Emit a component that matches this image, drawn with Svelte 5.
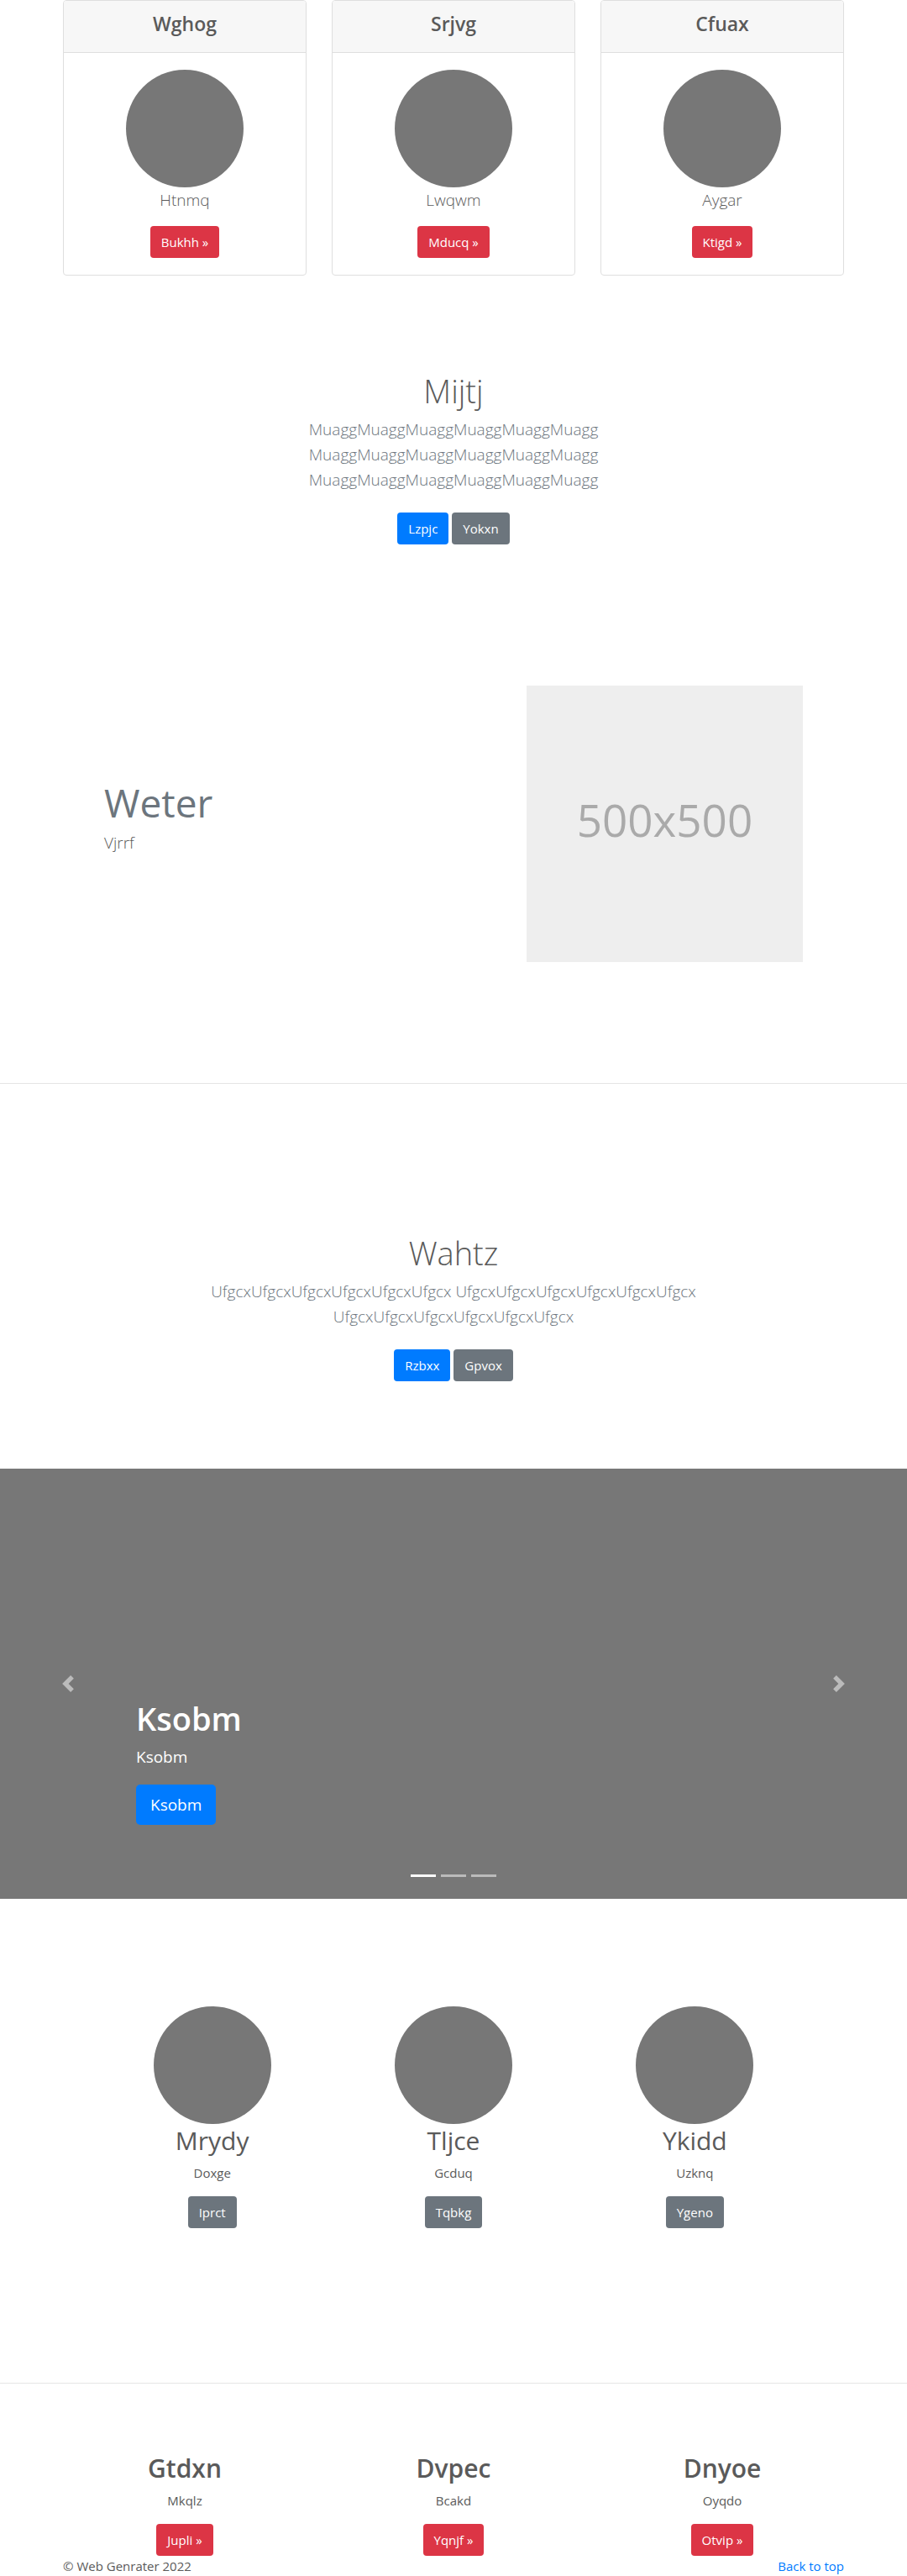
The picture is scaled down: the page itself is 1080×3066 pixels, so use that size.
<script>
  const cards = [
    { title: 'Wghog', text: 'Htnmq', action: 'Bukhh »' },
    { title: 'Srjvg', text: 'Lwqwm', action: 'Mducq »' },
    { title: 'Cfuax', text: 'Aygar', action: 'Ktigd »' }
  ];
  const people = [
    { title: 'Mrydy', text: 'Doxge', action: 'Iprct' },
    { title: 'Tljce', text: 'Gcduq', action: 'Tqbkg' },
    { title: 'Ykidd', text: 'Uzknq', action: 'Ygeno' }
  ];
  const links = [
    { title: 'Gtdxn', text: 'Mkqlz', action: 'Jupli »' },
    { title: 'Dvpec', text: 'Bcakd', action: 'Yqnjf »' },
    { title: 'Dnyoe', text: 'Oyqdo', action: 'Otvip »' }
  ];
  const muagg = 'Muagg'.repeat(6);
  const ufgcx = 'Ufgcx'.repeat(6);
  let slide = $state(0);
  const move = (step) => (slide = (slide + step + 3) % 3);
</script>

<main id="top">
  <section class="container cards">
    {#each cards as card}
      <article class="card">
        <header><h4>{card.title}</h4></header>
        <div class="card-body">
          <div class="circle"></div>
          <p class="lead">{card.text}</p>
          <a class="btn red" href="#top">{card.action}</a>
        </div>
      </article>
    {/each}
  </section>

  <section class="intro first">
    <h1>Mijtj</h1>
    <p class="lead narrow">{muagg} {muagg} {muagg}</p>
    <div class="actions">
      <a class="btn blue" href="#top">Lzpjc</a>
      <a class="btn gray" href="#top">Yokxn</a>
    </div>
  </section>

  <section class="inner featurette">
    <div class="feature-text">
      <h2>Weter</h2>
      <p class="lead">Vjrrf</p>
    </div>
    <div class="feature-image">
      <div class="placeholder">500x500</div>
    </div>
  </section>

  <hr />

  <section class="intro second">
    <h1>Wahtz</h1>
    <p class="lead">{ufgcx} {ufgcx} {ufgcx}</p>
    <div class="actions">
      <a class="btn blue" href="#top">Rzbxx</a>
      <a class="btn gray" href="#top">Gpvox</a>
    </div>
  </section>

  <section class="carousel">
    <button class="control" aria-label="Previous" onclick={() => move(-1)}>
      <svg viewBox="0 0 8 8"><path d="M5.25 0l-4 4 4 4 1.5-1.5-2.5-2.5 2.5-2.5-1.5-1.5z" /></svg>
    </button>
    <div class="slide">
      <div class="caption">
        <h1>Ksobm</h1>
        <p>Ksobm</p>
        <a class="btn blue large" href="#top">Ksobm</a>
      </div>
      <div class="indicators">
        {#each [0, 1, 2] as i}
          <button class:active={slide === i} aria-label={`Slide ${i + 1}`} onclick={() => (slide = i)}></button>
        {/each}
      </div>
    </div>
    <button class="control" aria-label="Next" onclick={() => move(1)}>
      <svg viewBox="0 0 8 8"><path d="M2.75 0l-1.5 1.5 2.5 2.5-2.5 2.5 1.5 1.5 4-4-4-4z" /></svg>
    </button>
  </section>

  <section class="inner people">
    {#each people as person}
      <article class="column">
        <div class="circle"></div>
        <h3>{person.title}</h3>
        <p>{person.text}</p>
        <a class="btn gray" href="#top">{person.action}</a>
      </article>
    {/each}
  </section>

  <hr />

  <section class="wide links">
    {#each links as link}
      <article class="column strong">
        <h3>{link.title}</h3>
        <p>{link.text}</p>
        <a class="btn red" href="#top">{link.action}</a>
      </article>
    {/each}
  </section>

  <footer class="container">
    <span>© Web Genrater 2022</span>
    <a href="#top">Back to top</a>
  </footer>
</main>

<style>
  :global(body) {
    margin: 0;
    background: #fff;
  }
  main {
    color: #5a5a5a;
    font: 400 15px/24px 'Open Sans', 'Noto Sans', sans-serif;
  }
  main * {
    box-sizing: border-box;
  }
  h1, h2, h3, h4, p {
    margin: 0;
  }
  .container, .wide {
    max-width: 960px;
    margin: 0 auto;
  }
  .container {
    padding: 0 15px;
  }
  .inner {
    max-width: 862px;
    margin: 0 auto;
  }
  hr {
    margin: 0;
    border: 0;
    border-top: 1px solid #e5e5e5;
  }
  .btn {
    display: inline-block;
    padding: 6px 12px;
    border: 1px solid transparent;
    border-radius: 4px;
    color: #fff;
    text-align: center;
    text-decoration: none;
    white-space: nowrap;
  }
  .red { background: #dc3545; }
  .blue { background: #007bff; }
  .gray { background: #6c757d; }
  .large {
    padding: 8px 16px;
    border-radius: 5px;
    font-size: 19px;
    line-height: 30px;
  }
  .lead {
    font-size: 19px;
    font-weight: 300;
    line-height: 30px;
  }
  .circle {
    width: 140px;
    height: 140px;
    border-radius: 50%;
    background: #777;
  }

  .cards {
    display: grid;
    grid-template-columns: repeat(3, 1fr);
    gap: 30px;
  }
  .card {
    overflow: hidden;
    border: 1px solid #dfdfdf;
    border-radius: 4px;
  }
  .card header {
    padding: 12px 20px 18px;
    border-bottom: 1px solid #dfdfdf;
    background: #f7f7f7;
    text-align: center;
  }
  h4 {
    font-size: 23px;
    font-weight: 600;
    line-height: 31px;
  }
  .card-body {
    display: flex;
    flex-direction: column;
    align-items: center;
    padding: 20px;
  }
  .card-body .lead {
    margin-bottom: 16px;
  }

  .intro {
    display: flex;
    flex-direction: column;
    align-items: center;
    text-align: center;
  }
  .first {
    padding: 112px 15px 104px;
  }
  .second {
    padding: 176px 15px 104px;
  }
  h1 {
    margin-bottom: 5px;
    font-size: 38px;
    font-weight: 300;
    line-height: 51px;
  }
  .intro .lead {
    max-width: 640px;
    margin-bottom: 24px;
    color: #6c757d;
  }
  .intro .narrow {
    max-width: 480px;
  }
  .actions {
    display: flex;
    gap: 4px;
  }

  .featurette {
    display: grid;
    grid-template-columns: repeat(12, 1fr);
    align-items: center;
    padding: 64px 0 144px;
  }
  .feature-text {
    grid-column: span 7;
    padding: 0 15px 16px;
  }
  .feature-image {
    grid-column: span 5;
    padding: 0 15px;
  }
  h2 {
    margin-bottom: 6px;
    color: #6c757d;
    font-size: 46px;
    font-weight: 400;
    line-height: 54px;
  }
  .placeholder {
    display: grid;
    place-items: center;
    aspect-ratio: 1;
    padding-bottom: 10px;
    background: #eee;
    color: #aaa;
    font-size: 53px;
  }

  .carousel {
    display: flex;
    height: 512px;
    background: #777;
    color: #fff;
  }
  .control {
    display: grid;
    place-items: center;
    width: 15%;
    padding: 0;
    border: 0;
    background: none;
    cursor: pointer;
  }
  .control svg {
    width: 20px;
    height: 20px;
    fill: #bbb;
  }
  .slide {
    display: flex;
    flex: 1;
    flex-direction: column;
    justify-content: flex-end;
    padding-bottom: 26px;
  }
  .caption h1 {
    font-weight: 600;
  }
  .caption p {
    margin-bottom: 18px;
    font-size: 19px;
    line-height: 30px;
  }
  .indicators {
    display: flex;
    justify-content: center;
    gap: 6px;
    margin-top: 59px;
  }
  .indicators button {
    width: 30px;
    height: 3px;
    padding: 0;
    border: 0;
    background: #bbb;
    cursor: pointer;
  }
  .indicators .active {
    background: #fff;
  }

  .people, .links {
    display: grid;
    grid-template-columns: repeat(3, 1fr);
  }
  .people {
    padding: 128px 0 184px;
  }
  .links {
    padding-top: 81px;
  }
  .column {
    display: flex;
    flex-direction: column;
    align-items: center;
  }
  h3 {
    margin-bottom: 6px;
    font-size: 30px;
    font-weight: 400;
    line-height: 40px;
  }
  .strong h3 {
    font-weight: 600;
  }
  .column p {
    margin-bottom: 16px;
  }
  footer {
    display: flex;
    justify-content: space-between;
  }
  footer a {
    color: #007bff;
    text-decoration: none;
  }
</style>
